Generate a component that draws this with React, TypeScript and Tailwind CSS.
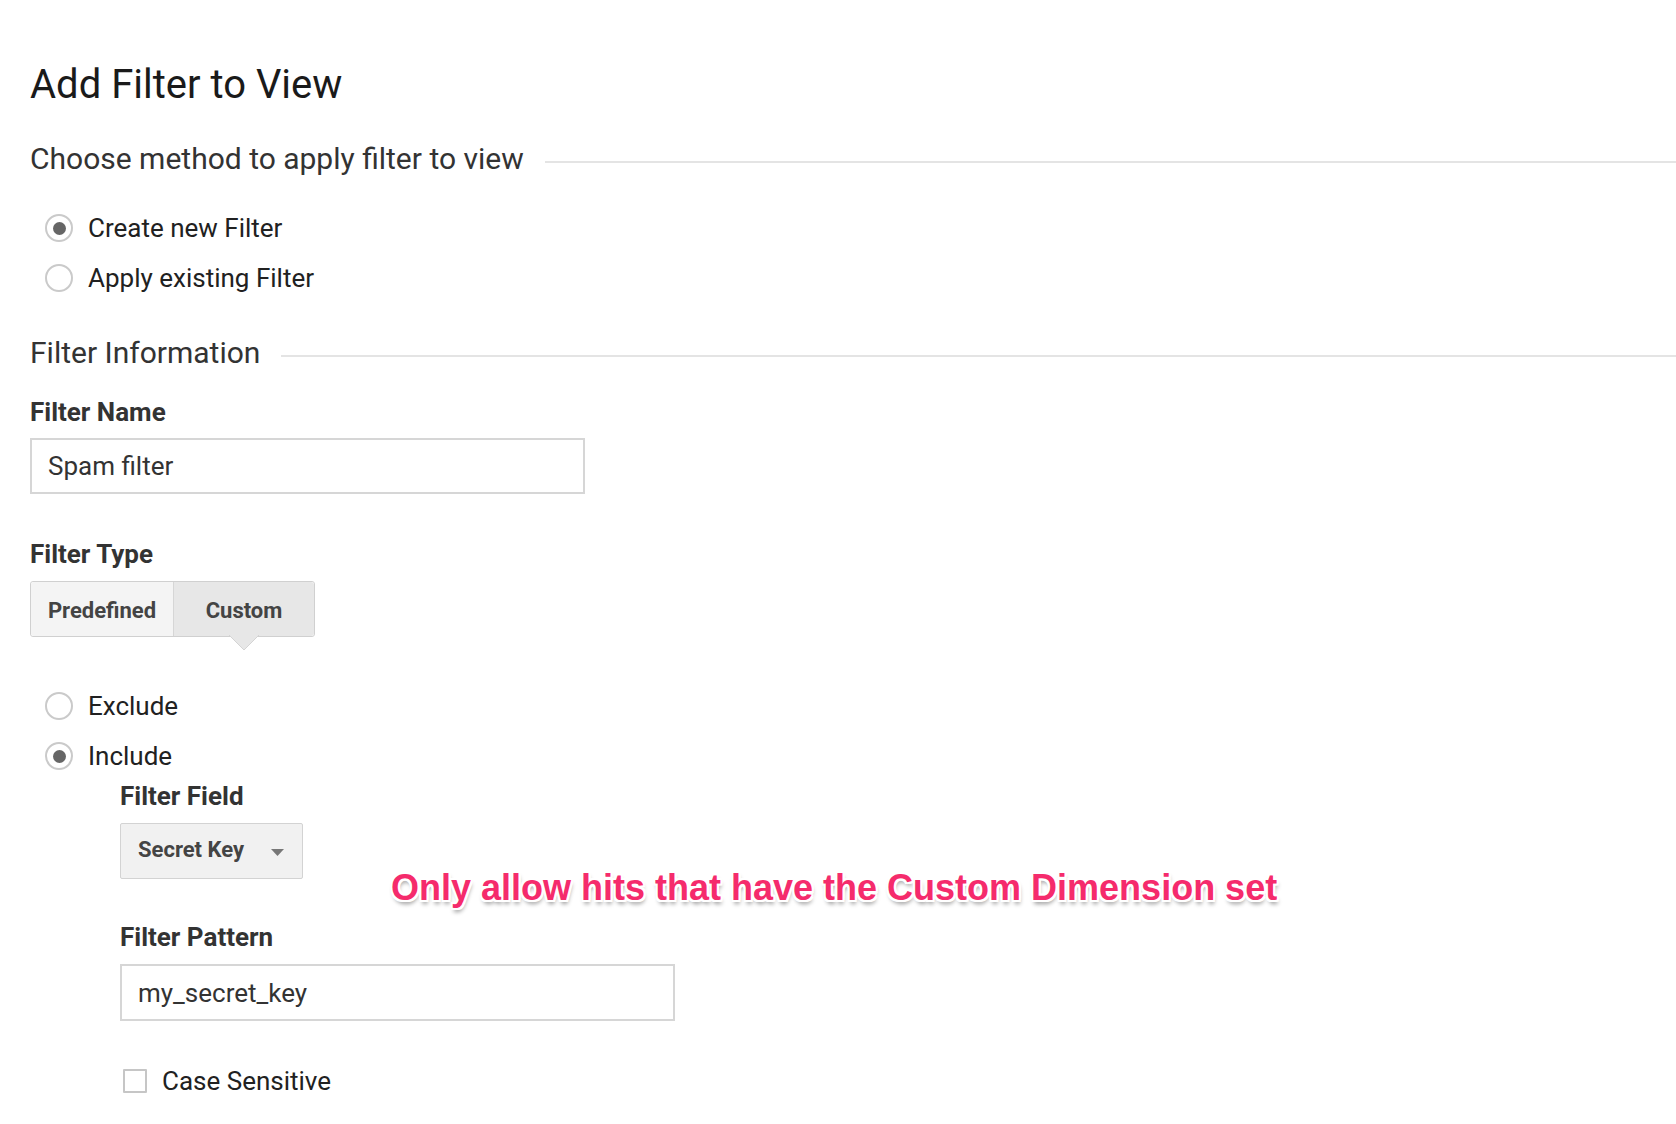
import { useState } from "react";

type RadioProps = { checked: boolean; label: string; onSelect: () => void };

const Radio = ({ checked, label, onSelect }: RadioProps) => (
  <button
    type="button"
    onClick={onSelect}
    className="flex h-[40px] items-center gap-[15px] pl-[15px] text-left"
  >
    <span className="flex h-[28px] w-[28px] shrink-0 items-center justify-center rounded-full border-2 border-[#cacaca] bg-white">
      {checked && <span className="h-[13px] w-[13px] rounded-full bg-[#666]" />}
    </span>
    <span className="text-[26px] text-[#212121]">{label}</span>
  </button>
);

const SectionHeader = ({ title }: { title: string }) => (
  <div className="flex h-[40px] items-center gap-[21px]">
    <h2 className="shrink-0 text-[30px] text-[#333]">{title}</h2>
    <div className="mt-2 h-[2px] flex-1 bg-[#e4e4e4]" />
  </div>
);

const Label = ({ children }: { children: string }) => (
  <div className="flex h-[40px] items-center text-[26px] font-bold text-[#333]">
    {children}
  </div>
);

const App = () => {
  const [method, setMethod] = useState<"new" | "existing">("new");
  const [filterType, setFilterType] = useState<"predefined" | "custom">("custom");
  const [mode, setMode] = useState<"exclude" | "include">("include");
  const [name, setName] = useState("Spam filter");
  const [pattern, setPattern] = useState("my_secret_key");
  const [caseSensitive, setCaseSensitive] = useState(false);

  return (
    <div className="relative min-h-screen overflow-hidden bg-white pb-[30px] pl-[30px] pt-[65px] font-['Roboto',sans-serif]">
      <h1 className="flex h-[40px] items-center text-[40px] text-[#1a1a1a]">
        Add Filter to View
      </h1>

      <div className="mt-[33px]">
        <SectionHeader title="Choose method to apply filter to view" />
      </div>

      <div className="mt-[30px] flex flex-col gap-[10px]">
        <Radio
          checked={method === "new"}
          label="Create new Filter"
          onSelect={() => setMethod("new")}
        />
        <Radio
          checked={method === "existing"}
          label="Apply existing Filter"
          onSelect={() => setMethod("existing")}
        />
      </div>

      <div className="mt-[34px]">
        <SectionHeader title="Filter Information" />
      </div>

      <div className="mt-[20px]">
        <Label>Filter Name</Label>
      </div>
      <input
        value={name}
        onChange={(e) => setName(e.target.value)}
        className="mt-[6px] block h-[56px] w-[555px] border-2 border-[#d6d6d6] bg-white px-[16px] text-[26px] text-[#333] outline-none"
      />

      <div className="mt-[40px]">
        <Label>Filter Type</Label>
      </div>
      <div className="mt-[7px] flex h-[56px] w-[285px] rounded-[3px] border border-[#d0d0d0]">
        <button
          type="button"
          onClick={() => setFilterType("predefined")}
          className={`flex w-[143px] items-center justify-center rounded-l-[3px] border-r border-[#d6d6d6] pt-[2px] text-[22px] font-bold text-[#444] ${
            filterType === "predefined" ? "bg-[#e6e6e6]" : "bg-[#f4f4f4]"
          }`}
        >
          Predefined
        </button>
        <button
          type="button"
          onClick={() => setFilterType("custom")}
          className={`relative flex flex-1 items-center justify-center rounded-r-[3px] pt-[2px] text-[22px] font-bold text-[#444] ${
            filterType === "custom" ? "bg-[#e7e7e7]" : "bg-[#f4f4f4]"
          }`}
        >
          Custom
          {filterType === "custom" && (
            <svg
              width="30"
              height="16"
              viewBox="0 0 30 16"
              className="absolute left-1/2 top-full -mt-px -translate-x-1/2"
            >
              <polygon points="0,0 30,0 15,15" fill="#e7e7e7" />
              <polyline points="0,0 15,15 30,0" fill="none" stroke="#d4d4d4" strokeWidth="1" />
            </svg>
          )}
        </button>
      </div>

      <div className="mt-[49px] flex flex-col gap-[10px]">
        <Radio
          checked={mode === "exclude"}
          label="Exclude"
          onSelect={() => setMode("exclude")}
        />
        <Radio
          checked={mode === "include"}
          label="Include"
          onSelect={() => setMode("include")}
        />
      </div>

      <div className="pl-[90px]">
        <Label>Filter Field</Label>
        <button
          type="button"
          className="mt-[7px] flex h-[56px] w-[183px] items-center justify-between rounded-[2px] border border-[#d3d3d3] bg-[#f1f1f1] pb-[4px] pl-[17px] pr-[18px] text-[22px] font-bold text-[#444]"
        >
          <span>Secret Key</span>
          <svg width="13" height="7" viewBox="0 0 13 7" className="mt-[6px]">
            <polygon points="0,0 13,0 6.5,7" fill="#777" />
          </svg>
        </button>

        <div className="mt-[38px]">
          <Label>Filter Pattern</Label>
        </div>
        <input
          value={pattern}
          onChange={(e) => setPattern(e.target.value)}
          className="mt-[7px] block h-[57px] w-[555px] border-2 border-[#d6d6d6] bg-white px-[16px] text-[26px] text-[#333] outline-none"
        />

        <button
          type="button"
          onClick={() => setCaseSensitive((prev) => !prev)}
          className="mt-[40px] flex h-[40px] items-center gap-[15px] pl-[3px]"
        >
          <span className="flex h-[24px] w-[24px] items-center justify-center rounded-[1px] border-2 border-[#c6c6c6] bg-white text-[18px] leading-none text-[#444]">
            {caseSensitive ? "✓" : ""}
          </span>
          <span className="text-[26px] text-[#212121]">Case Sensitive</span>
        </button>
      </div>

      <p className="absolute left-[391px] top-[868px] flex h-[40px] items-center whitespace-nowrap font-['Liberation_Sans',Arial,sans-serif] text-[36px] font-bold text-[#f52b6c] [text-shadow:2px_0_0_#fff,-2px_0_0_#fff,0_2px_0_#fff,0_-2px_0_#fff,2px_2px_0_#fff,-2px_-2px_0_#fff,2px_-2px_0_#fff,-2px_2px_0_#fff,1px_4px_4px_rgba(0,0,0,0.4)]">
        Only allow hits that have the Custom Dimension set
      </p>
    </div>
  );
};

export default App;
